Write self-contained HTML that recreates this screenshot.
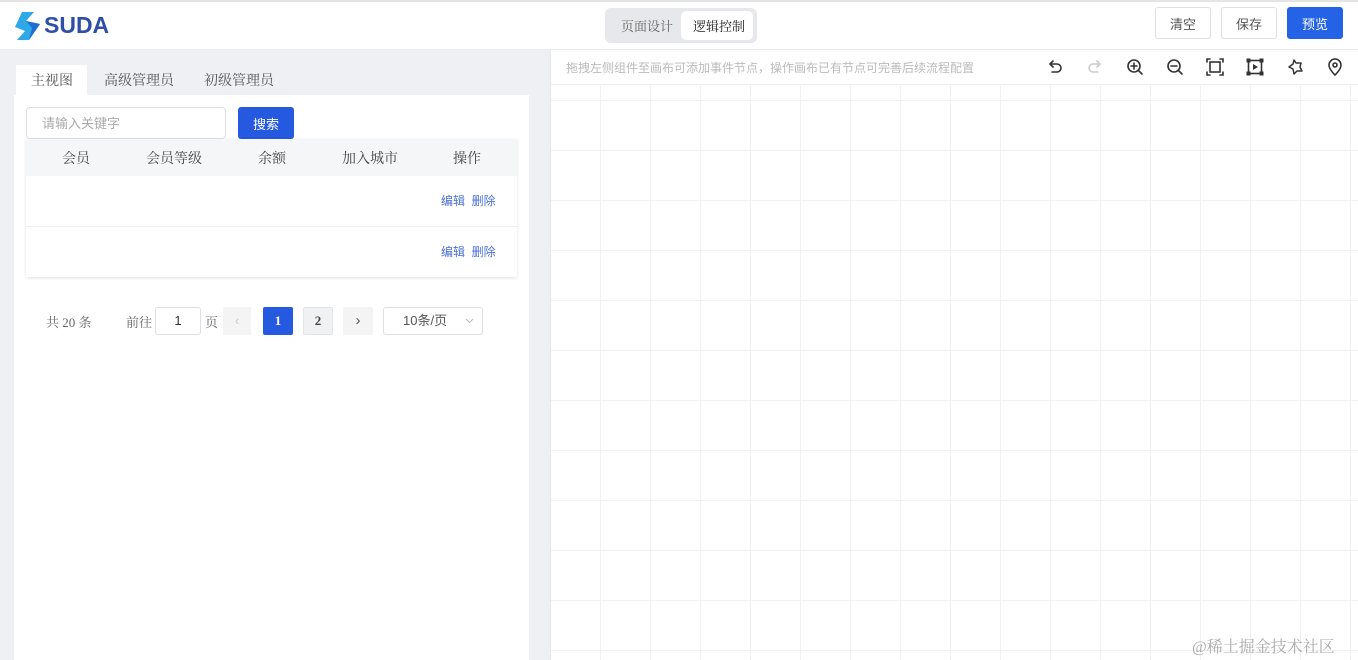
<!DOCTYPE html>
<html><head><meta charset="utf-8"><style>
*{box-sizing:border-box;margin:0;padding:0}
body{width:1358px;height:660px;overflow:hidden;background:#fff;font-family:"Liberation Sans","Noto Sans CJK SC",sans-serif;position:relative;color:#333}
.abs{position:absolute}
.btn{position:absolute;top:7px;height:32px;border:1px solid #dcdfe6;border-radius:3px;font-size:13px;color:#555;display:flex;align-items:center;justify-content:center;background:#fff}
.serif{font-family:"Liberation Serif","Noto Serif CJK SC",serif}
.ic{position:absolute;top:58px;width:18px;height:18px}
</style></head><body>
<div class="abs" style="left:0;top:0;width:1358px;height:2px;background:#e4e4e4"></div>
<div class="abs" style="left:0;top:49px;width:1358px;height:1px;background:#ececec"></div>
<!-- logo -->
<svg class="abs" style="left:13px;top:11px" width="30" height="30" viewBox="0 0 30 30"><path d="M9 1 L21 1 L13 10 L27 13 L16 29 L4 29 L12 20 L2 16 Z" fill="#2fa8e8"/><path d="M13 10 L27 13 L16 29 L19 17 Z" fill="#1d6fd0"/></svg>
<div class="abs" style="left:44px;top:12px;font-size:23px;font-weight:bold;color:#2d4fa8">SUDA</div>
<!-- segmented -->
<div class="abs" style="left:605px;top:8px;width:152px;height:35px;background:#e6e8eb;border-radius:6px"></div>
<div class="abs" style="left:681px;top:11px;width:72px;height:29px;background:#fff;border-radius:5px"></div>
<div class="abs serif" style="left:621px;top:16px;font-size:13px;color:#666">页面设计</div>
<div class="abs serif" style="left:693px;top:16px;font-size:13px;color:#222">逻辑控制</div>
<div class="btn" style="left:1155px;width:56px">清空</div>
<div class="btn" style="left:1221px;width:56px">保存</div>
<div class="btn" style="left:1287px;width:56px;background:#2563e6;border-color:#2563e6;color:#fff">预览</div>
<!-- left panel -->
<div class="abs" style="left:0;top:50px;width:550px;height:610px;background:#eef0f3"></div>
<div class="abs" style="left:14px;top:95px;width:515px;height:565px;background:#fff"></div>
<div class="abs" style="left:16px;top:65px;width:71px;height:31px;background:#fff"></div>
<div class="abs serif" style="left:31px;top:70px;font-size:14px;color:#555">主视图</div>
<div class="abs serif" style="left:104px;top:70px;font-size:14px;color:#555">高级管理员</div>
<div class="abs serif" style="left:204px;top:70px;font-size:14px;color:#555">初级管理员</div>
<div class="abs" style="left:26px;top:107px;width:200px;height:32px;border:1px solid #dcdfe6;border-radius:4px"></div>
<div class="abs" style="left:42px;top:113px;font-size:13px;color:#aaa">请输入关键字</div>
<div class="abs" style="left:238px;top:107px;width:56px;height:32px;background:#2459e0;border-radius:3px;color:#fff;font-size:13px;display:flex;align-items:center;justify-content:center">搜索</div>
<div class="abs" style="left:26px;top:139px;width:491px;height:138px;background:#fff;box-shadow:0 1px 3px rgba(0,0,0,.12)"></div>
<div class="abs" style="left:26px;top:139px;width:491px;height:37px;background:#f5f6f8"></div>
<div class="abs serif" style="left:26px;top:148px;width:491px;font-size:14px;color:#444">
<span class="abs" style="left:36px">会员</span><span class="abs" style="left:120px">会员等级</span><span class="abs" style="left:232px">余额</span><span class="abs" style="left:316px">加入城市</span><span class="abs" style="left:427px">操作</span></div>
<div class="abs" style="left:26px;top:226px;width:491px;height:1px;background:#ebeef2"></div>
<div class="abs" style="left:441px;top:192px;font-size:12px;color:#4a6fd6">编辑&nbsp;&nbsp;删除</div>
<div class="abs" style="left:441px;top:243px;font-size:12px;color:#4a6fd6">编辑&nbsp;&nbsp;删除</div>
<!-- pagination -->
<div class="abs serif" style="left:46px;top:312px;font-size:13px;color:#666">共 20 条</div>
<div class="abs serif" style="left:126px;top:312px;font-size:13px;color:#666">前往</div>
<div class="abs" style="left:155px;top:307px;width:46px;height:28px;border:1px solid #dcdfe6;border-radius:3px;font-size:13px;text-align:center;line-height:26px">1</div>
<div class="abs serif" style="left:205px;top:312px;font-size:13px;color:#666">页</div>
<div class="abs" style="left:223px;top:307px;width:28px;height:28px;background:#f4f4f5;color:#ccc;text-align:center;line-height:28px;font-size:13px">‹</div>
<div class="abs serif" style="left:263px;top:307px;width:30px;height:28px;background:#2459e0;color:#fff;text-align:center;line-height:28px;font-size:13px;font-weight:bold;border-radius:2px">1</div>
<div class="abs serif" style="left:303px;top:307px;width:30px;height:28px;background:#f0f1f3;border:1px solid #e4e4e4;color:#444;text-align:center;line-height:26px;font-size:13px;font-weight:bold;border-radius:2px">2</div>
<div class="abs" style="left:343px;top:307px;width:30px;height:28px;background:#f4f4f5;color:#555;text-align:center;line-height:27px;font-size:15px">›</div>
<div class="abs" style="left:383px;top:307px;width:100px;height:28px;border:1px solid #dcdfe6;border-radius:3px;font-size:13px;color:#555;line-height:26px;padding-left:19px">10条/页</div>
<svg class="abs" style="left:465px;top:318px" width="9" height="6" viewBox="0 0 9 6" fill="none" stroke="#bbb" stroke-width="1"><path d="M1 1l3.5 3.5L8 1"/></svg>
<!-- canvas -->
<div class="abs" style="left:550px;top:50px;width:808px;height:610px;background-color:#fff;background-image:linear-gradient(#f1f1f1 1px,transparent 1px),linear-gradient(90deg,#f1f1f1 1px,transparent 1px);background-size:50px 50px;background-position:0 0"></div>
<div class="abs" style="left:550px;top:50px;width:808px;height:35px;background:#fff;border-bottom:1px solid #eee"></div>
<div class="abs" style="left:550px;top:50px;width:1px;height:610px;background:#e6e6e6"></div>
<div class="abs" style="left:566px;top:59px;font-size:12px;color:#bbb">拖拽左侧组件至画布可添加事件节点，操作画布已有节点可完善后续流程配置</div>
<svg class="ic" style="left:1046px" viewBox="0 0 18 18" fill="none" stroke="#333" stroke-width="1.6" stroke-linecap="round"><path d="M4 6h7a4 4 0 0 1 0 8H6M7 3L4 6l3 3"/></svg>
<svg class="ic" style="left:1086px" viewBox="0 0 18 18" fill="none" stroke="#ccc" stroke-width="1.6" stroke-linecap="round"><path d="M14 6H7a4 4 0 0 0 0 8h5M11 3l3 3-3 3"/></svg>
<svg class="ic" style="left:1126px" viewBox="0 0 18 18" fill="none" stroke="#333" stroke-width="1.6" stroke-linecap="round"><circle cx="8" cy="8" r="6"/><path d="M12.5 12.5L16 16M5 8h6M8 5v6"/></svg>
<svg class="ic" style="left:1166px" viewBox="0 0 18 18" fill="none" stroke="#333" stroke-width="1.6" stroke-linecap="round"><circle cx="8" cy="8" r="6"/><path d="M12.5 12.5L16 16M5 8h6"/></svg>
<svg class="ic" style="left:1206px" viewBox="0 0 18 18" fill="none" stroke="#333" stroke-width="1.6" stroke-linecap="round"><rect x="4" y="4" width="10" height="10"/><path d="M1 4V1h3M14 1h3v3M17 14v3h-3M4 17H1v-3"/></svg>
<svg class="ic" style="left:1246px" viewBox="0 0 18 18"><rect x="2.5" y="2.5" width="13" height="13" fill="none" stroke="#333" stroke-width="1.6"/><rect x="0.5" y="0.5" width="4" height="4" fill="#333"/><rect x="13.5" y="0.5" width="4" height="4" fill="#333"/><rect x="0.5" y="13.5" width="4" height="4" fill="#333"/><rect x="13.5" y="13.5" width="4" height="4" fill="#333"/><path d="M7 6l5 3-5 3z" fill="#333"/></svg>
<svg class="ic" style="left:1286px" viewBox="0 0 18 18" fill="none" stroke="#333" stroke-width="1.5" stroke-linejoin="round"><path d="M8 2l2 3 5 0-1 4 2 4-5 0-3 3-1-5-4-2 4-3z"/></svg>
<svg class="ic" style="left:1326px" viewBox="0 0 18 18" fill="none" stroke="#333" stroke-width="1.6"><path d="M9 17s-6-5.5-6-10a6 6 0 0 1 12 0c0 4.5-6 10-6 10z"/><circle cx="9" cy="7" r="2"/></svg>
<div class="abs serif" style="left:1192px;top:634px;font-size:16px;color:#aaa">@稀土掘金技术社区</div>
</body></html>
